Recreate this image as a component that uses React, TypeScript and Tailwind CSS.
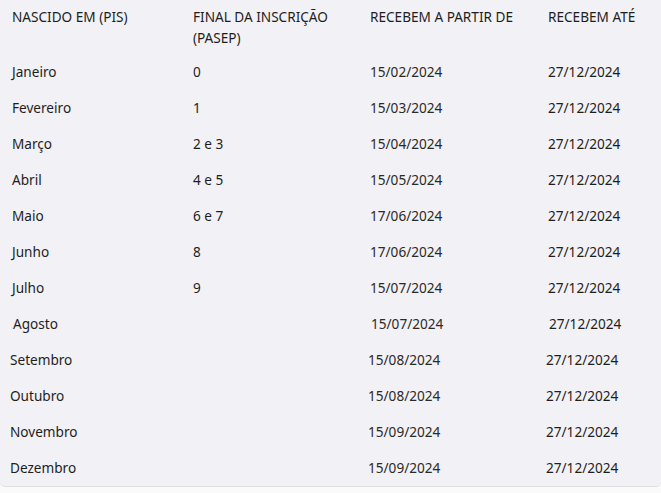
const rows = [
  { mes: "Janeiro", final: "0", de: "15/02/2024", ate: "27/12/2024", shift: 0 },
  { mes: "Fevereiro", final: "1", de: "15/03/2024", ate: "27/12/2024", shift: 0 },
  { mes: "Março", final: "2 e 3", de: "15/04/2024", ate: "27/12/2024", shift: 0 },
  { mes: "Abril", final: "4 e 5", de: "15/05/2024", ate: "27/12/2024", shift: 0 },
  { mes: "Maio", final: "6 e 7", de: "17/06/2024", ate: "27/12/2024", shift: 0 },
  { mes: "Junho", final: "8", de: "17/06/2024", ate: "27/12/2024", shift: 0 },
  { mes: "Julho", final: "9", de: "15/07/2024", ate: "27/12/2024", shift: 0 },
  { mes: "Agosto", final: "", de: "15/07/2024", ate: "27/12/2024", shift: 1 },
  { mes: "Setembro", final: "", de: "15/08/2024", ate: "27/12/2024", shift: -2 },
  { mes: "Outubro", final: "", de: "15/08/2024", ate: "27/12/2024", shift: -2 },
  { mes: "Novembro", final: "", de: "15/09/2024", ate: "27/12/2024", shift: -2 },
  { mes: "Dezembro", final: "", de: "15/09/2024", ate: "27/12/2024", shift: -2 },
];

export default function App() {
  return (
    <div
      className="w-[661px] h-[493px] bg-[#fafafa] overflow-hidden text-[13.6px] text-[#1e1e1e]"
      style={{ fontFamily: '"Noto Sans", "Open Sans", sans-serif' }}
    >
      <div className="bg-[#f2f1f5] border-b border-[#dedde0] rounded-b-[5px]">
        {/* header */}
        <div className="grid grid-cols-[181px_177px_178px_1fr] h-[54px] pt-[6px] leading-[21px]">
          <div className="pl-3">NASCIDO EM (PIS)</div>
          <div className="pl-3">
            FINAL DA INSCRIÇÃO
            <br />
            (PASEP)
          </div>
          <div className="pl-3">RECEBEM A PARTIR DE</div>
          <div className="pl-3">RECEBEM ATÉ</div>
        </div>

        {rows.map((r, i) => {
          const pad = r.shift === 1 ? "pl-[13px]" : r.shift === -2 ? "pl-[10px]" : "pl-3";
          return (
            <div key={i} className="grid grid-cols-[181px_177px_178px_1fr] h-9 items-center">
              <div className={pad}>{r.mes}</div>
              <div className="pl-3">{r.final}</div>
              <div className={`${pad} text-[#2a2a26]`}>{r.de}</div>
              <div className={pad}>{r.ate}</div>
            </div>
          );
        })}
      </div>
    </div>
  );
}
